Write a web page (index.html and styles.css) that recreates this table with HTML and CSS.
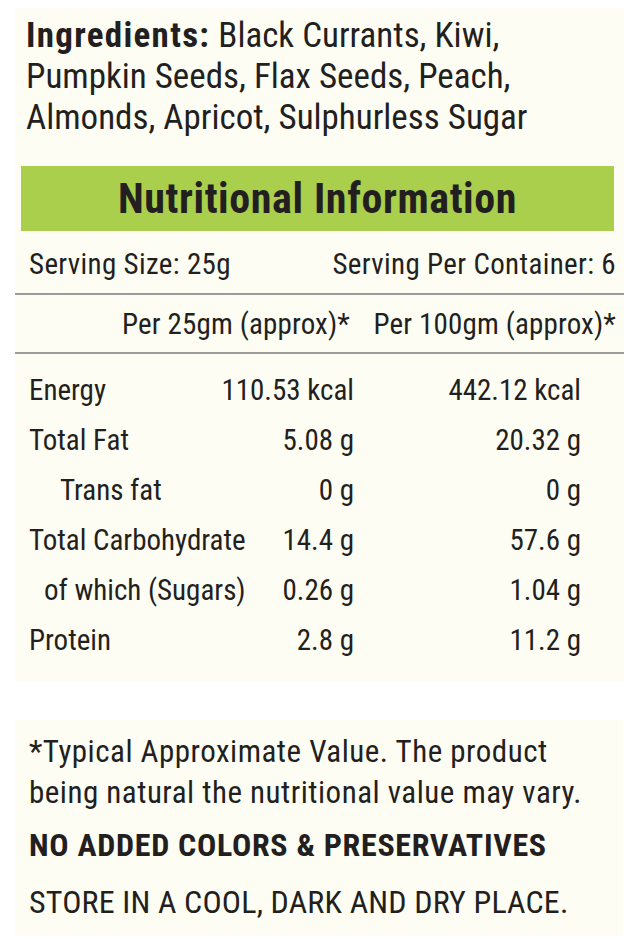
FILE: index.html
```html
<!DOCTYPE html>
<html lang="en">
<head>
<meta charset="utf-8">
<title>Nutritional Information</title>
<link rel="stylesheet" href="styles.css">
</head>
<body>
<main class="label">
  <section class="panel panel-main">
    <p class="ingredients">
      <span class="line"><strong>Ingredients:</strong> Black Currants, Kiwi,</span>
      <span class="line">Pumpkin Seeds, Flax Seeds, Peach,</span>
      <span class="line">Almonds, Apricot, Sulphurless Sugar</span>
    </p>
    <h1 class="title-bar">Nutritional Information</h1>
    <div class="serving">
      <span>Serving Size: 25g</span>
      <span>Serving Per Container: 6</span>
    </div>
    <div class="col-head">
      <span class="cell">Per 25gm (approx)*</span>
      <span class="cell">Per 100gm (approx)*</span>
    </div>
    <div class="facts">
      <span class="name">Energy</span><span class="val">110.53 kcal</span><span class="val">442.12 kcal</span>
      <span class="name">Total Fat</span><span class="val">5.08 g</span><span class="val">20.32 g</span>
      <span class="name sub">Trans fat</span><span class="val">0 g</span><span class="val">0 g</span>
      <span class="name">Total Carbohydrate</span><span class="val">14.4 g</span><span class="val">57.6 g</span>
      <span class="name sub2">of which (Sugars)</span><span class="val">0.26 g</span><span class="val">1.04 g</span>
      <span class="name">Protein</span><span class="val">2.8 g</span><span class="val">11.2 g</span>
    </div>
  </section>
  <section class="panel panel-notes">
    <p class="note">
      <span class="line">*Typical Approximate Value. The product</span>
      <span class="line">being natural the nutritional value may vary.</span>
    </p>
    <p class="warn">NO ADDED COLORS &amp; PRESERVATIVES</p>
    <p class="store">STORE IN A COOL, DARK AND DRY PLACE.</p>
  </section>
</main>
</body>
</html>
```

FILE: styles.css
```css
* { box-sizing: border-box; }
html, body { margin: 0; padding: 0; background: #ffffff; }
body {
  font-family: Roboto, "Liberation Sans", sans-serif;
  font-stretch: 75%;
  color: #231f20;
}
.label {
  width: 644px;
  padding: 8px 20px 0 15px;
}
.panel { background: #fdfdf4; }
.line { display: block; white-space: nowrap; }

.panel-main {
  height: 674px;
  padding-top: 7px;
}
.ingredients {
  margin: 0;
  padding-left: 11px;
  font-size: 35px;
  line-height: 41px;
}
.ingredients strong {
  font-weight: 700;
  letter-spacing: 1.3px;
}
.title-bar {
  margin: 28px 10px 0 6px;
  height: 65px;
  background: #a9cf4c;
  font-size: 42px;
  font-weight: 700;
  letter-spacing: 0.6px;
  line-height: 65px;
  text-align: center;
}
.serving {
  display: flex;
  justify-content: space-between;
  align-items: center;
  height: 64px;
  padding: 4px 8px 0 14px;
  font-size: 29px;
  letter-spacing: 0.35px;
  border-bottom: 2px solid #9d9d9d;
}
.col-head {
  display: grid;
  grid-template-columns: 335px 266px;
  align-items: center;
  height: 59px;
  font-size: 29px;
  letter-spacing: 0.15px;
  border-bottom: 2px solid #9d9d9d;
}
.col-head .cell { text-align: right; white-space: nowrap; }
.facts {
  display: grid;
  grid-template-columns: 190px 135px 227px;
  grid-auto-rows: 50px;
  align-items: center;
  padding: 11px 0 0 14px;
  font-size: 29px;
  white-space: nowrap;
}
.facts .val { text-align: right; }
.facts .sub { padding-left: 31px; }
.facts .sub2 { padding-left: 15px; }

.panel-notes {
  margin: 38px 1px 0 0;
  height: 216px;
  padding: 11px 0 0 14px;
}
.note {
  margin: 0;
  font-size: 31px;
  letter-spacing: 0.5px;
  line-height: 41px;
}
.warn {
  margin: 12px 0 0;
  font-size: 32px;
  font-weight: 700;
  letter-spacing: 0.7px;
  line-height: 41px;
}
.store {
  margin: 16px 0 0;
  font-size: 32px;
  letter-spacing: 0.17px;
  line-height: 41px;
}
```
